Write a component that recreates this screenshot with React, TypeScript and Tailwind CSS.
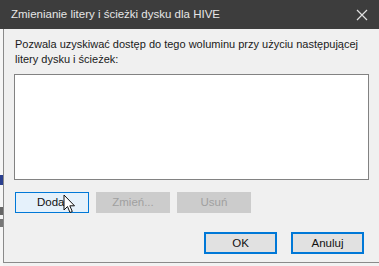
const font = { fontFamily: '"Liberation Sans", Arial, sans-serif' };

const Cursor = () => (
  <svg className="absolute left-[63px] top-[194px]" width="14" height="20" viewBox="0 0 14 20">
    <path d="M1 1 L1 16 L4.5 12.5 L7 18.5 L9.3 17.5 L6.8 11.8 L11.5 11.8 Z" fill="#fff" stroke="#111" strokeWidth="1" strokeLinejoin="round" />
  </svg>
);

export default function App() {
  return (
    <div
      className="relative w-[379px] h-[266px] overflow-hidden bg-[#f2f2f2] text-[11.5px] leading-[15px] text-[#1a1a1a] flex flex-col"
      style={font}
    >
      <div className="h-[29px] shrink-0 bg-[#3d3d3d] flex items-center justify-between pl-[11px] pr-[8px] text-[#e6e6e6]">
        <span className="text-[11.5px] whitespace-nowrap">Zmienianie litery i ścieżki dysku dla HIVE</span>
        <svg width="12" height="12" viewBox="0 0 12 12" className="mr-[3px]">
          <path d="M1 1 L11 11 M11 1 L1 11" stroke="#e0e0e0" strokeWidth="1.2" />
        </svg>
      </div>
      <div className="flex flex-1 min-h-0">
        <div className="w-[3px] shrink-0 bg-[#f6f6f6] flex flex-col">
          <div className="h-[146px]" />
          <div className="h-[10px] bg-[#2a3f8f]" />
          <div className="h-[22px]" />
          <div className="h-[8px] bg-[#666]" />
          <div className="h-[4px]" />
          <div className="h-[8px] bg-[#777]" />
        </div>
        <div className="flex-1 flex flex-col">
          <div className="h-[234px] border-l border-b border-[#8a8a8a] bg-[#f0f0f0] pl-[10px] pt-[8px] flex flex-col">
            <p className="ml-[1px] text-[11px] whitespace-nowrap">
              Pozwala uzyskiwać dostęp do tego woluminu przy użyciu następującej
              <br />
              litery dysku i ścieżek:
            </p>
            <div className="mt-[7px] w-[355px] h-[106px] bg-white border border-[#828282]" />
            <div className="mt-[12px] flex gap-[7px] ml-[1px]">
              <button className="w-[74px] h-[21px] bg-[#e5f1fb] border border-[#0078d7] text-[#111]">Dodaj</button>
              <button className="w-[74px] h-[21px] bg-[#cccccc] border border-[#cccccc] text-[#a0a0a0]">Zmień...</button>
              <button className="w-[74px] h-[21px] bg-[#cccccc] border border-[#cccccc] text-[#a0a0a0]">Usuń</button>
            </div>
            <div className="mt-[19px] flex gap-[14px] ml-[190px]">
              <button className="w-[73px] h-[22px] bg-[#e1e1e1] border-2 border-[#0078d7] text-[#111]">OK</button>
              <button className="w-[73px] h-[22px] bg-[#e1e1e1] border-2 border-[#0078d7] text-[#111]">Anuluj</button>
            </div>
          </div>
        </div>
      </div>
      <Cursor />
    </div>
  );
}
